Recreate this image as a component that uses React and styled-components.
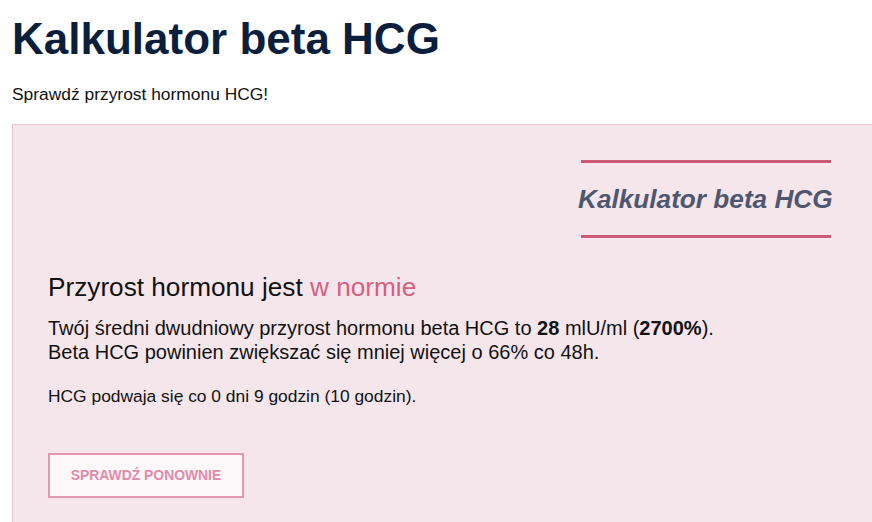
import React from 'react';
import styled, { createGlobalStyle } from 'styled-components';

const GlobalStyle = createGlobalStyle`
  html, body {
    margin: 0;
    padding: 0;
    overflow: hidden;
    background: #ffffff;
  }
  body {
    font-family: "Liberation Sans", Arial, sans-serif;
    color: #111111;
  }
`;

const Page = styled.main`
  padding: 17px 0 0 12px;
`;

const Title = styled.h1`
  margin: 0;
  font-size: 44px;
  line-height: 44px;
  font-weight: 700;
  color: #0b1f3d;
`;

const Lead = styled.p`
  margin: 23px 0 0;
  font-size: 17.4px;
  line-height: 21px;
  color: #111111;
`;

const Panel = styled.section`
  margin-top: 19px;
  width: 900px;
  box-sizing: border-box;
  padding: 35px 0 40px 35px;
  background: #f5e6eb;
  border: 1px solid #e6c8d2;
  display: flex;
  flex-direction: column;
`;

const Badge = styled.div`
  align-self: flex-start;
  margin-left: 533px;
  width: 250px;
  border-top: 3px solid #cb5a76;
  border-bottom: 3px solid #cb5a76;
  white-space: nowrap;
  text-indent: -3px;
  font-size: 26.2px;
  line-height: 72px;
  font-weight: 700;
  font-style: italic;
  color: #4e5670;
`;

const Heading = styled.h2`
  margin: 34px 0 0;
  font-size: 26.2px;
  line-height: 31.7px;
  font-weight: 400;
  color: #111111;
`;

const Accent = styled.span`
  color: #d8607e;
`;

const Summary = styled.p`
  margin: 12px 0 0;
  font-size: 20px;
  line-height: 24.75px;
`;

const Note = styled.p`
  margin: 18px 0 0;
  font-size: 17.4px;
  line-height: 26.4px;
`;

const Button = styled.button`
  margin-top: 43px;
  width: 196px;
  height: 45px;
  box-sizing: border-box;
  padding: 0;
  background: #fdf8fa;
  border: 2px solid #e397b2;
  color: #e38aab;
  font-family: "Liberation Sans", Arial, sans-serif;
  font-size: 13.9px;
  font-weight: 700;
  text-transform: uppercase;
  cursor: pointer;
`;

export default function App() {
  return (
    <>
      <GlobalStyle />
      <Page>
        <Title>Kalkulator beta HCG</Title>
        <Lead>Sprawdź przyrost hormonu HCG!</Lead>
        <Panel>
          <Badge>Kalkulator beta HCG</Badge>
          <Heading>
            Przyrost hormonu jest <Accent>w normie</Accent>
          </Heading>
          <Summary>
            Twój średni dwudniowy przyrost hormonu beta HCG to <b>28</b> mlU/ml (<b>2700%</b>).
            <br />
            Beta HCG powinien zwiększać się mniej więcej o 66% co 48h.
          </Summary>
          <Note>HCG podwaja się co 0 dni 9 godzin (10 godzin).</Note>
          <div>
            <Button type="button">Sprawdź ponownie</Button>
          </div>
        </Panel>
      </Page>
    </>
  );
}
